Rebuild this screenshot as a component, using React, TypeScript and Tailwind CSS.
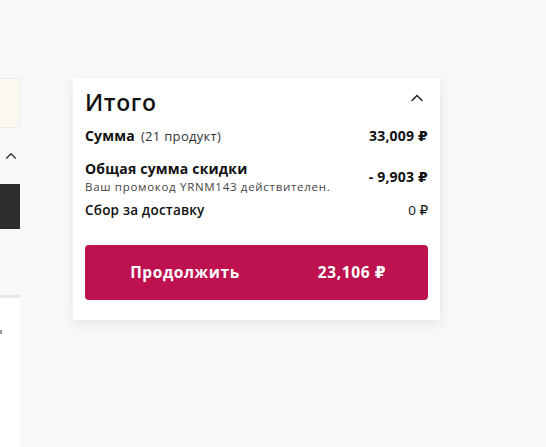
import { ChevronUp } from 'lucide-react';

function LeftColumn() {
  return (
    <div className="w-[20px] shrink-0 overflow-hidden">
      <div className="mt-[78px] h-[50px] w-[40px] -ml-[20px] border border-[#ececec] bg-[#fdf7f2]" />
      <div className="flex h-[56px] items-center justify-end">
        <ChevronUp className="h-[18px] w-[18px] text-[#222]" strokeWidth={1.5} />
      </div>
      <div className="h-[45px] bg-[#2d2d2d]" />
      <div className="mt-[66px] h-[3px] bg-[#e6e6e6]" />
      <div className="h-[200px] bg-white pt-[32px]">
        <div className="h-[4px] w-[2px] bg-[#999]" />
      </div>
    </div>
  );
}

function Row({ label, value, children }: { label: React.ReactNode; value: string; children?: React.ReactNode }) {
  return (
    <div className="flex items-center justify-between">
      <div>
        {label}
        {children}
      </div>
      <div className="text-[14px] font-bold tracking-[0.2px] text-[#111]">{value}</div>
    </div>
  );
}

export default function App() {
  return (
    <div
      className="flex h-[447px] w-[546px] bg-[#f8f8f8]"
      style={{ fontFamily: '"Open Sans", "DejaVu Sans", sans-serif' }}
    >
      <LeftColumn />
      <div className="ml-[53px] mt-[78px] h-[242px] w-[367px] bg-white px-[12px] pt-[8px] shadow-[0_4px_12px_rgba(0,0,0,0.08)]">
        <div className="flex items-center justify-between">
          <h2 className="text-[23px] font-semibold leading-[32px] tracking-[0.6px] text-[#111]">Итого</h2>
          <ChevronUp className="mb-[8px] mr-[1px] h-[20px] w-[20px] text-[#111]" strokeWidth={1.5} />
        </div>
        <div className="mt-[5px]">
          <Row
            value="33,009 ₽"
            label={
              <span className="text-[14px] font-bold tracking-[0.2px] text-[#111]">
                Сумма
                <span className="ml-[6px] text-[13px] font-normal tracking-[0.3px] text-[#333]">(21 продукт)</span>
              </span>
            }
          />
        </div>
        <div className="mt-[12px]">
          <Row value="- 9,903 ₽" label={<div className="text-[14px] font-bold leading-[20px] tracking-[0.2px] text-[#111]">Общая сумма скидки</div>}>
            <div className="text-[11.5px] leading-[15px] tracking-[0.7px] text-[#444]">Ваш промокод YRNM143 действителен.</div>
          </Row>
        </div>
        <div className="mt-[6px] flex items-center justify-between">
          <span className="text-[13.5px] font-semibold tracking-[0.2px] text-[#111]">Сбор за доставку</span>
          <span className="text-[13.5px] text-[#111]">0 ₽</span>
        </div>
        <button className="mt-[25px] flex h-[55px] w-full items-center rounded-[4px] bg-[#bd1150] text-white">
          <span className="w-[200px] text-center text-[15.5px] font-bold tracking-[0.6px]">Продолжить</span>
          <span className="w-[134px] text-center text-[15.5px] font-bold tracking-[0.6px]">23,106 ₽</span>
        </button>
      </div>
    </div>
  );
}
